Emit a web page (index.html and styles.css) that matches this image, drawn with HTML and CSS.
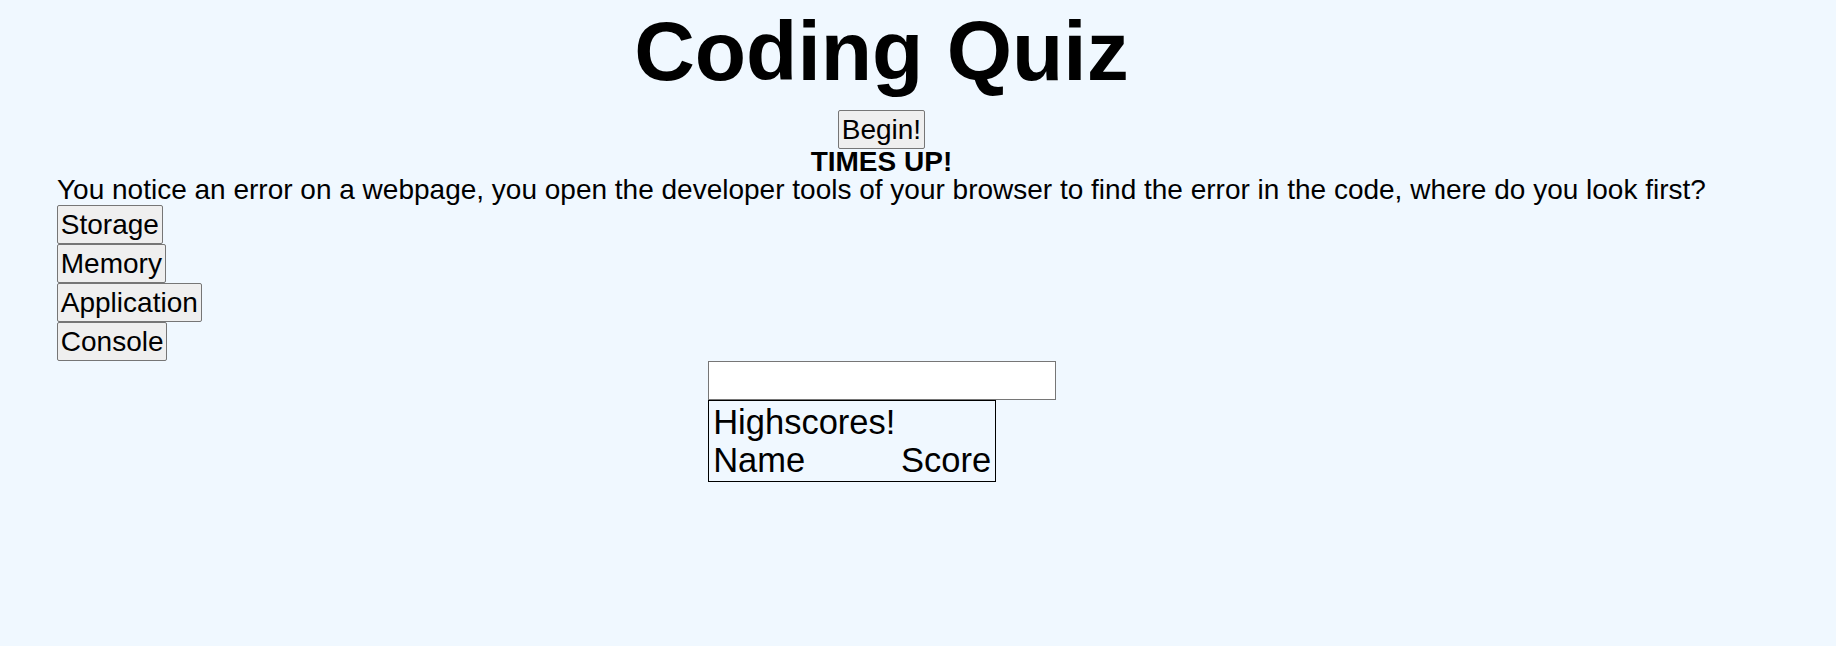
FILE: index.html
```html
<!DOCTYPE html>
<html lang="en">
<head>
<meta charset="utf-8">
<title>Coding Quiz</title>
<link rel="stylesheet" href="styles.css">
</head>
<body>
<main class="quiz">
  <h1 class="title">Coding Quiz</h1>
  <div class="start">
    <button class="btn" type="button">Begin!</button>
  </div>
  <div class="timer">TIMES UP!</div>
  <p class="question">You notice an error on a webpage, you open the developer tools of your browser to find the error in the code, where do you look first?</p>
  <div class="answers">
    <button class="btn answer" type="button">Storage</button>
    <button class="btn answer" type="button">Memory</button>
    <button class="btn answer" type="button">Application</button>
    <button class="btn answer" type="button">Console</button>
  </div>
  <div class="scores">
    <input class="name-input" type="text" aria-label="Your initials">
    <div class="board">
      <div class="board-title">Highscores!</div>
      <div class="board-head">
        <span>Name</span>
        <span>Score</span>
      </div>
    </div>
  </div>
</main>
</body>
</html>
```

FILE: styles.css
```css
html, body {
  margin: 0;
  padding: 0;
}

body {
  background: #f0f8ff;
  color: #000;
  font-family: "Liberation Sans", Arial, sans-serif;
  font-size: 28px;
  min-height: 646px;
}

.quiz {
  width: fit-content;
  margin-left: 57px;
}

.title {
  margin: 0;
  font-size: 84px;
  font-weight: bold;
  line-height: 102px;
  text-align: center;
}

.start {
  margin-top: 8px;
  text-align: center;
  line-height: 0;
}

.btn {
  font-family: "Liberation Sans", Arial, sans-serif;
  font-size: 28px;
  line-height: 32px;
  color: #000;
  background: #efefef;
  border: 1px solid #767676;
  border-radius: 2px;
  padding: 2.5px 2.8px;
  margin: 0;
}

.timer {
  font-weight: bold;
  text-align: center;
  line-height: 26px;
}

.question {
  margin: 0;
  line-height: 30px;
  white-space: nowrap;
}

.answers {
  display: flex;
  flex-direction: column;
  align-items: flex-start;
}

.scores {
  width: fit-content;
  margin: 0 auto;
  padding-left: 1px;
  display: flex;
  flex-direction: column;
  align-items: flex-start;
}

.name-input {
  box-sizing: border-box;
  width: 347.5px;
  height: 38.5px;
  margin: 0;
  border: 1px solid #767676;
  background: #fff;
  font-family: "Liberation Sans", Arial, sans-serif;
  font-size: 28px;
  padding: 1px 2px;
}

.board {
  box-sizing: border-box;
  width: 288px;
  border: 1px solid #000;
  padding: 2px 4px 2px 4px;
  font-size: 34.5px;
  line-height: 38px;
}

.board-head {
  display: flex;
  justify-content: space-between;
}
```
